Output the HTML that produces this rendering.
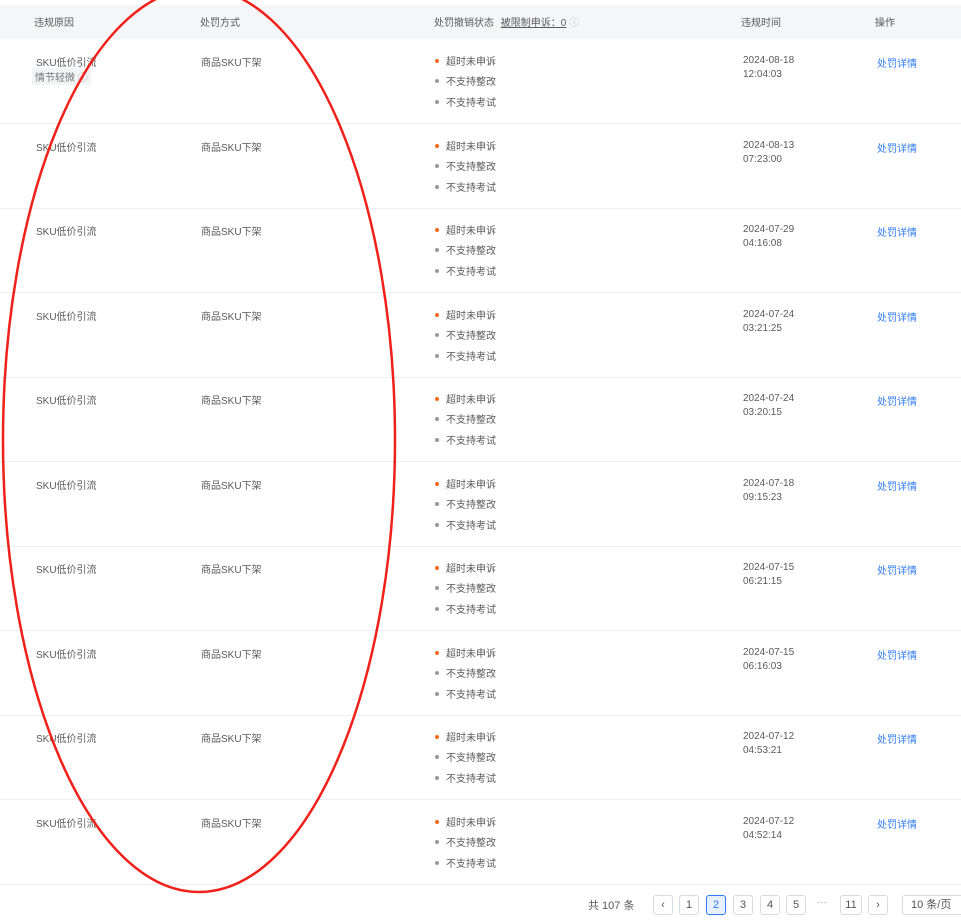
<!DOCTYPE html>
<html><head><meta charset="utf-8"><style>
body{margin:0;width:961px;height:924px;background:#fff;font-family:"Liberation Sans","Noto Sans CJK SC",sans-serif;font-size:10px;color:#5a5a5a;position:relative;overflow:hidden}
.a{position:absolute;white-space:nowrap}
.hd{position:absolute;left:0;top:5px;width:961px;height:34px;background:#f5f6f8}
.sep{position:absolute;left:0;width:961px;height:1px;background:#eceef1}
.dot{display:inline-block;width:4px;height:4px;border-radius:50%;background:#999;margin-right:7px;vertical-align:middle;position:relative;top:-1px}
.o{background:#f56a1b}
.lk{color:#2f7bf5}
.pg{position:absolute;top:895px;height:18px;border:1px solid #d8dbe0;border-radius:3px;text-align:center;line-height:18px;font-size:11px;color:#555;background:#fff}
</style></head><body>
<div class="hd"></div>
<div class="a" style="left:34px;top:14px">违规原因</div>
<div class="a" style="left:200px;top:14px">处罚方式</div>
<div class="a" style="left:434px;top:14px">处罚撤销状态 <span style="text-decoration:underline;margin-left:4px">被限制申诉：0</span> <span style="color:#bbb">ⓘ</span></div>
<div class="a" style="left:741px;top:14px">违规时间</div>
<div class="a" style="left:875px;top:14px">操作</div>
<div id="rows"></div>
<script>
var d=[["2024-08-18","12:04:03"],["2024-08-13","07:23:00"],["2024-07-29","04:16:08"],["2024-07-24","03:21:25"],["2024-07-24","03:20:15"],["2024-07-18","09:15:23"],["2024-07-15","06:21:15"],["2024-07-15","06:16:03"],["2024-07-12","04:53:21"],["2024-07-12","04:52:14"]];
var h="";
for(var i=0;i<10;i++){var t=Math.round(39+i*84.5);
h+='<div class="a" style="left:36px;top:'+(t+15)+'px">SKU低价引流</div>';
if(i==0)h+='<div class="a" style="left:32px;top:'+(t+29)+'px;background:#f3f4f6;padding:1px 3px;color:#777">情节轻微 <span style="color:#aaa">ⓘ</span></div>';
h+='<div class="a" style="left:201px;top:'+(t+15)+'px">商品SKU下架</div>';
h+='<div class="a" style="left:435px;top:'+(t+14)+'px"><span class="dot o"></span>超时未申诉</div>';
h+='<div class="a" style="left:435px;top:'+(t+34)+'px"><span class="dot"></span>不支持整改</div>';
h+='<div class="a" style="left:435px;top:'+(t+55)+'px"><span class="dot"></span>不支持考试</div>';
h+='<div class="a" style="left:743px;top:'+(t+16)+'px">'+d[i][0]+'</div>';
h+='<div class="a" style="left:743px;top:'+(t+30)+'px">'+d[i][1]+'</div>';
h+='<div class="a lk" style="left:877px;top:'+(t+16)+'px">处罚详情</div>';
h+='<div class="sep" style="top:'+(t+84)+'px"></div>';}
document.getElementById("rows").innerHTML=h;
</script>
<div class="a" style="left:588px;top:897px;font-size:11px">共 107 条</div>
<div class="pg" style="left:653px;width:18px">‹</div>
<div class="pg" style="left:679px;width:18px">1</div>
<div class="pg" style="left:706px;width:18px;border-color:#2f7bf5;background:#e8f0fe;color:#2f7bf5">2</div>
<div class="pg" style="left:733px;width:18px">3</div>
<div class="pg" style="left:760px;width:18px">4</div>
<div class="pg" style="left:786px;width:18px">5</div>
<div class="a" style="left:817px;top:897px;color:#999">···</div>
<div class="pg" style="left:840px;width:20px">11</div>
<div class="pg" style="left:868px;width:18px">›</div>
<div class="pg" style="left:902px;width:64px;text-align:left;padding-left:8px">10 条/页</div>
<svg style="position:absolute;left:0;top:0" width="961" height="924"><ellipse cx="199" cy="440" rx="196" ry="452" fill="none" stroke="#f0201a" stroke-width="2.5"/></svg>
</body></html>
